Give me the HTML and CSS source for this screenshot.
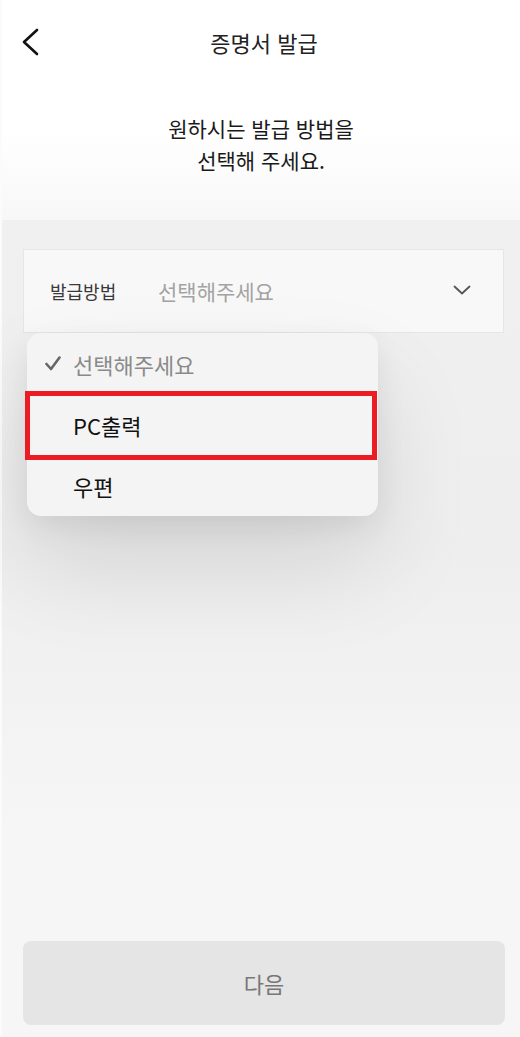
FILE: index.html
```html
<!DOCTYPE html>
<html lang="ko">
<head>
    <meta charset="UTF-8">
    <meta name="viewport" content="width=device-width, initial-scale=1.0">
    <title>증명서 발급</title>
    <link rel="stylesheet" href="styles.css">
</head>
<body>
    <div class="page">
        <header class="top-bar">
            <button class="back-btn" type="button" aria-label="뒤로">
                <svg width="20" height="30" viewBox="0 0 20 30">
                    <polyline points="17,3 4,15 17,27" fill="none" stroke="#111" stroke-width="2.6" stroke-linecap="round" stroke-linejoin="round"/>
                </svg>
            </button>
            <h1 class="title">증명서 발급</h1>
            <span></span>
        </header>

        <div class="intro">
            <p>원하시는 발급 방법을<br>선택해 주세요.</p>
        </div>

        <main class="panel">
            <div class="select-wrap">
                <div class="field">
                    <span class="field-label">발급방법</span>
                    <span class="field-value">선택해주세요</span>
                    <svg class="chevron" width="18" height="10" viewBox="0 0 18 10">
                        <polyline points="1.5,1.5 9,8.5 16.5,1.5" fill="none" stroke="#555" stroke-width="1.8" stroke-linecap="round" stroke-linejoin="round"/>
                    </svg>
                </div>

                <ul class="menu">
                    <li class="menu-item selected">
                        <span class="check">
                            <svg width="16" height="15" viewBox="0 0 16 15">
                                <polyline points="1.5,8 6,13 14.5,1.5" fill="none" stroke="#666" stroke-width="2.6" stroke-linecap="round" stroke-linejoin="round"/>
                            </svg>
                        </span>
                        선택해주세요
                    </li>
                    <li class="menu-item highlight">
                        <span class="check"></span>
                        PC출력
                    </li>
                    <li class="menu-item">
                        <span class="check"></span>
                        우편
                    </li>
                </ul>
            </div>

            <div class="footer">
                <button class="next-btn" type="button" disabled>다음</button>
            </div>
        </main>
    </div>
</body>
</html>
```

FILE: styles.css
```css
/* CSS styles */
html, body {
    margin: 0;
    padding: 0;
}

body {
    background-color: #f6f6f6;
    font-family: "Noto Sans CJK KR", "Noto Sans", sans-serif;
    color: #111;
}

.page {
    min-height: 100vh;
    display: flex;
    flex-direction: column;
    border-left: 2px solid #fbfbfb;
    box-sizing: border-box;
}

.top-bar {
    height: 84px;
    display: grid;
    grid-template-columns: 60px 1fr 60px;
    align-items: center;
    background-color: #fff;
}

.back-btn {
    border: none;
    background: none;
    padding: 0 0 0 18px;
    height: 30px;
    display: flex;
    align-items: center;
    cursor: pointer;
}

.title {
    margin: 0;
    text-align: center;
    font-size: 22px;
    font-weight: 400;
    color: #222;
    padding-left: 6px;
}

.intro {
    padding: 28px 0 44px;
    background: linear-gradient(#fff 0%, #fff 35%, #f7f7f7 100%);
}

.intro p {
    margin: 0;
    text-align: center;
    font-size: 21px;
    line-height: 32px;
    color: #1a1a1a;
}

.panel {
    flex: 1;
    display: flex;
    flex-direction: column;
    background: linear-gradient(#f0f0f0 0%, #eeeeee 40%, #f6f6f6 75%);
    padding-top: 29px;
}

.select-wrap {
    position: relative;
    margin: 0 16px 0 21px;
}

.field {
    height: 84px;
    box-sizing: border-box;
    display: flex;
    align-items: center;
    border: 1px solid #e6e6e6;
    background-color: #f8f8f8;
    padding: 0 32px 0 26px;
}

.field-label {
    width: 108px;
    font-size: 18px;
    color: #3a3a3a;
}

.field-value {
    flex: 1;
    font-size: 21px;
    color: #a3a3a3;
}

.chevron {
    margin-top: -3px;
}

.menu {
    position: absolute;
    top: 84px;
    left: 4px;
    width: 351px;
    margin: 0;
    padding: 0;
    list-style: none;
    background-color: #f4f4f4;
    border-radius: 14px;
    box-shadow: 0 50px 100px rgba(0, 0, 0, 0.11), 0 10px 30px rgba(0, 0, 0, 0.07);
}

.menu-item {
    position: relative;
    height: 61px;
    display: flex;
    align-items: center;
    padding-left: 18px;
    font-size: 22px;
    color: #111;
}

.menu-item.selected {
    color: #8a8a8a;
}

.check {
    width: 28px;
    display: flex;
    align-items: center;
}

.menu-item.highlight::after {
    content: "";
    position: absolute;
    top: -3px;
    bottom: -5px;
    left: -2px;
    right: 1px;
    border: 5px solid #ec1c24;
}

.footer {
    margin-top: auto;
    padding: 0 15px 12px 21px;
}

.next-btn {
    width: 100%;
    height: 84px;
    border: none;
    border-radius: 8px;
    background-color: #e5e5e5;
    color: #777;
    font-family: inherit;
    font-size: 22px;
}
```
